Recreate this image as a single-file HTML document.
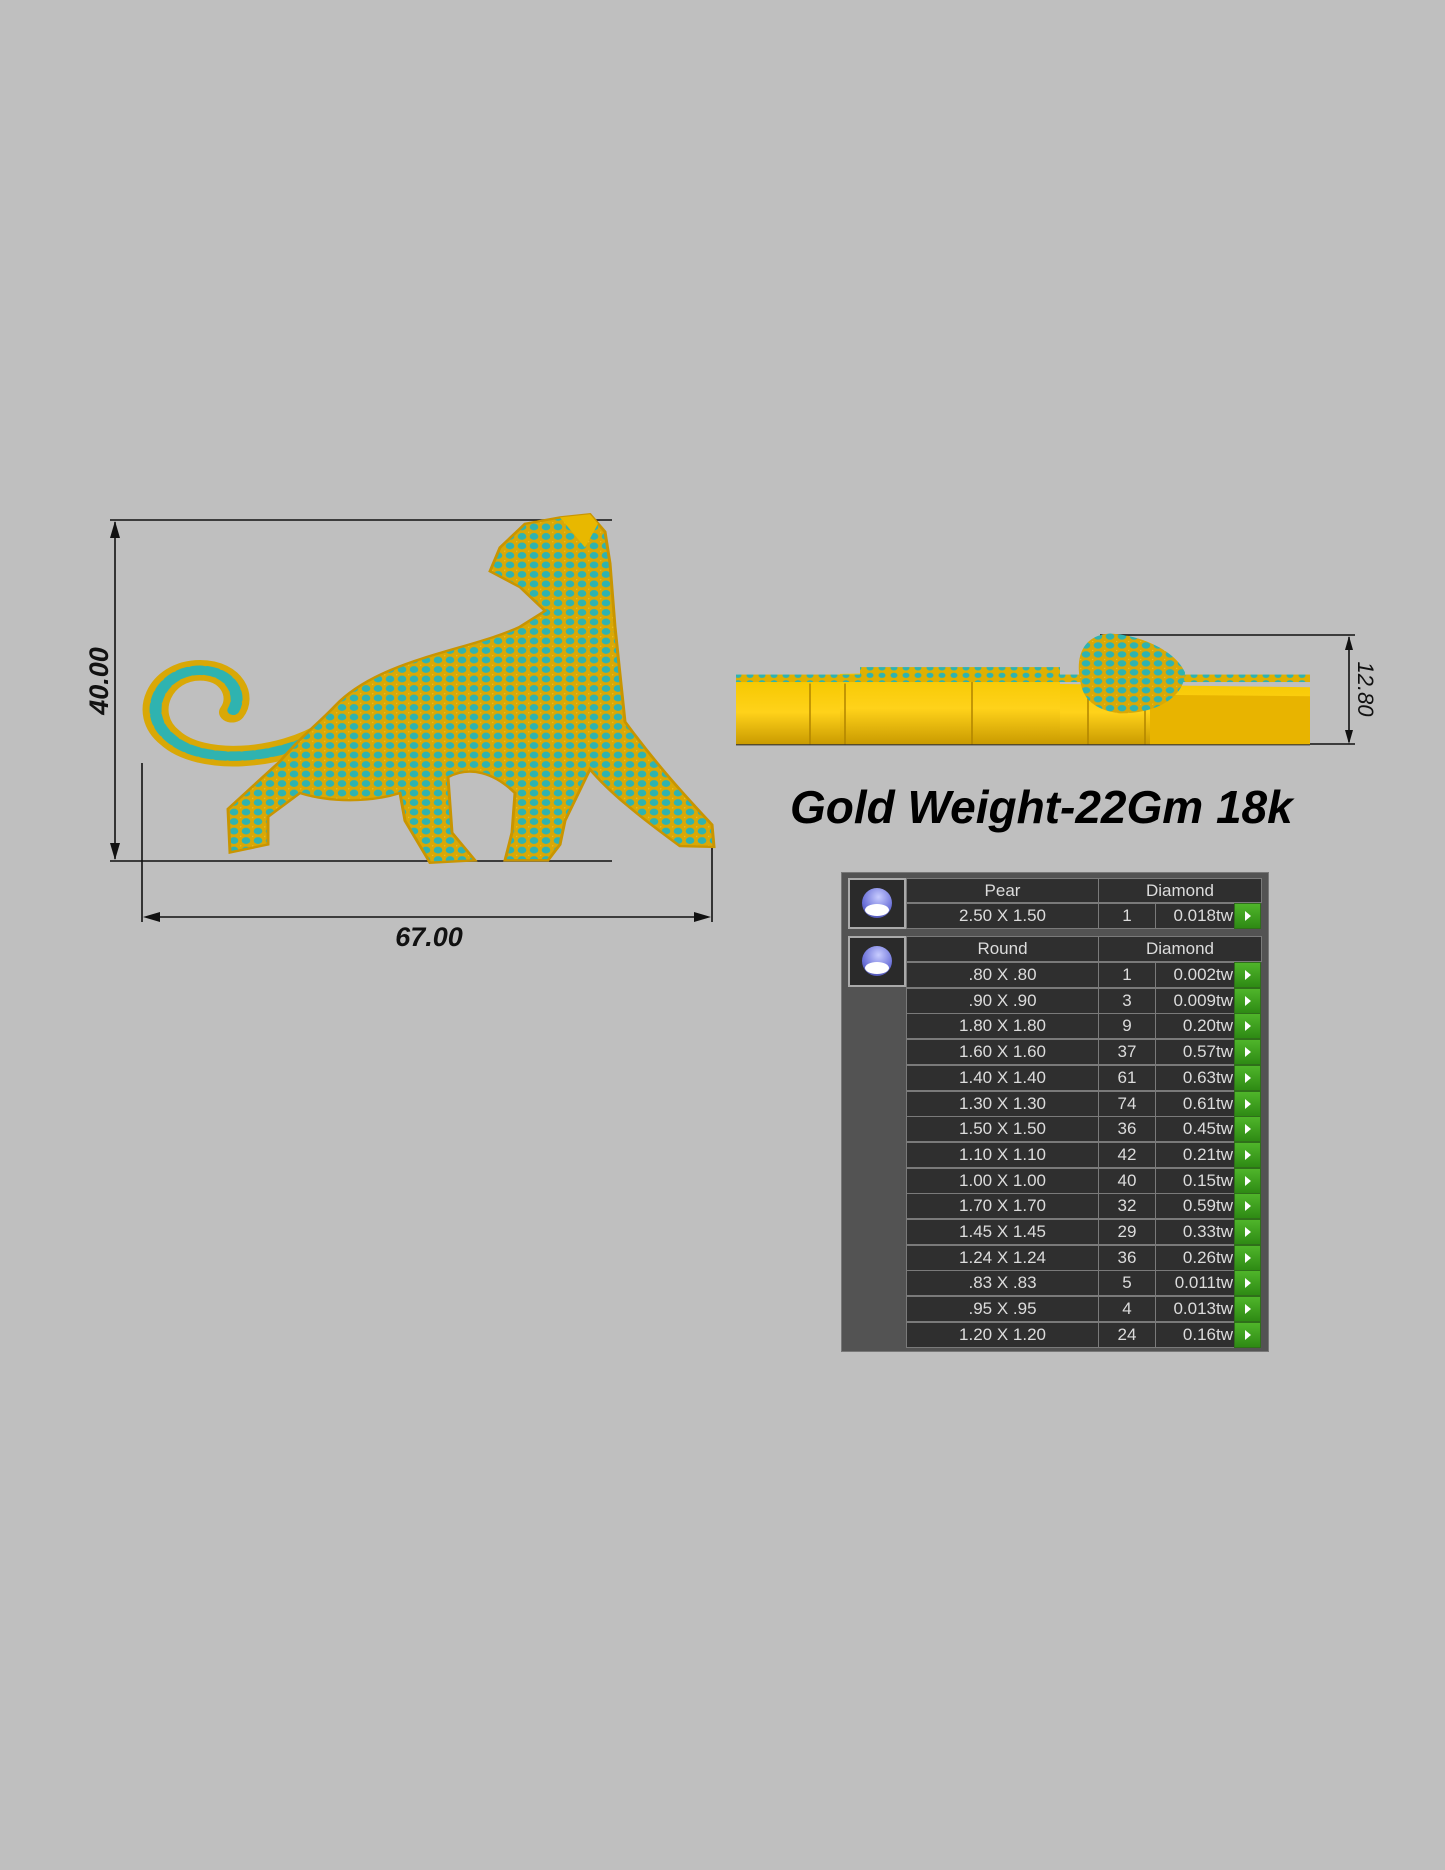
<!DOCTYPE html>
<html><head><meta charset="utf-8"><style>
body{margin:0;background:#bfbfbf;width:1445px;height:1870px;position:relative;overflow:hidden;font-family:"Liberation Sans",sans-serif}
.a{position:absolute}
.panel{left:841px;top:872px;width:428px;height:480px;background:#535353;border:1px solid #777;box-sizing:border-box}
.r{position:absolute;left:906px;width:356px;display:flex;color:#dcdcdc;font-size:17px}
.r div{background:#2f2f2f;border:1px solid #7a7a7a;box-sizing:border-box;display:flex;align-items:center;justify-content:center;height:100%;margin-right:-1px}
.c1{width:193px}.c2{width:58px}.c3{width:80px;justify-content:flex-end!important;padding-right:1px}
.r .b{width:27px;background:linear-gradient(#4fb52a,#2e8a14);border-color:#2f6f1a}
.b:after{content:"";border-left:6px solid #fff;border-top:5px solid transparent;border-bottom:5px solid transparent}
.h{width:164px}
.ic{position:absolute;left:848px;width:58px;height:51px;border:2px solid #aaa;box-sizing:border-box;background:#2a2a2a}
.ic:before{content:"";position:absolute;left:12px;top:8px;width:30px;height:30px;border-radius:50%;background:radial-gradient(circle at 55% 30%,#c8ccff,#6a70d8 60%,#3a3f90)}
.ic:after{content:"";position:absolute;left:15px;top:24px;width:24px;height:12px;border-radius:50%;background:#fff}
</style></head><body>

<svg class="a" style="left:0;top:0" width="1445" height="1870">
<defs>
<pattern id="dots" width="12" height="12" patternUnits="userSpaceOnUse">
<rect width="12" height="12" fill="#d9a806"/>
<circle cx="6" cy="6" r="4.3" fill="#2fb3b0"/>
<circle cx="0" cy="0" r="1.5" fill="#f0c020"/>
</pattern>
<pattern id="dots2" width="12" height="10" patternUnits="userSpaceOnUse">
<rect width="12" height="10" fill="#e0b000"/>
<circle cx="6" cy="4" r="3.5" fill="#2fb3b0"/>
</pattern>
<linearGradient id="gold" x1="0" y1="0" x2="0" y2="1"><stop offset="0" stop-color="#f5c800"/><stop offset="0.5" stop-color="#ffd21a"/><stop offset="1" stop-color="#c99a00"/></linearGradient>
</defs>
<g stroke="#111" stroke-width="1.6" fill="none">
<line x1="110" y1="520" x2="612" y2="520"/>
<line x1="110" y1="861" x2="612" y2="861"/>
<line x1="115" y1="522" x2="115" y2="859"/>
<line x1="142" y1="763" x2="142" y2="922"/>
<line x1="712" y1="835" x2="712" y2="922"/>
<line x1="146" y1="917" x2="708" y2="917"/>
<line x1="1100" y1="635" x2="1355" y2="635"/>
<line x1="1310" y1="744" x2="1355" y2="744"/>
<line x1="1349" y1="637" x2="1349" y2="742"/>
</g>
<g fill="#111">
<polygon points="115,521 110,538 120,538"/><polygon points="115,860 110,843 120,843"/>
<polygon points="143,917 160,912 160,922"/><polygon points="711,917 694,912 694,922"/>
<polygon points="1349,636 1345,650 1353,650"/><polygon points="1349,744 1345,730 1353,730"/>
</g>
<g transform="matrix(1 0 0 0.792 0 104)">
<path d="M330 790 C280 830,200 835,170 800 C140 770,160 715,200 715 C232 715,244 748,232 768" stroke="#d9a806" stroke-width="26" fill="none" stroke-linecap="round"/>
<path d="M330 790 C280 830,200 835,170 800 C140 770,160 715,200 715 C232 715,244 748,232 768" stroke="#2fb3b0" stroke-width="12" stroke-dasharray="9 5" fill="none" stroke-linecap="round"/>
<path d="M335 760 C380 700,470 690,520 660 L545 640 L520 610 L490 590 L500 560 L525 530 L560 522 L590 518 L605 540 L610 580 L615 660 L625 780 C660 840,690 880,712 910 L714 938 L680 937 C640 900,610 870,590 840 L565 905 L560 935 L548 955 L505 955 L512 920 L515 870 C495 845,470 835,448 850 L452 920 L475 955 L430 958 L405 905 L400 870 C370 882,330 882,300 870 L268 900 L268 935 L230 945 L228 890 L280 830 C300 800,320 780,335 760 Z" fill="url(#dots)" stroke="#c99500" stroke-width="3"/>
<path d="M560 522 L590 518 L598 530 L585 560 Z" fill="#e8b800"/>
</g>
<g transform="matrix(1 0 0 0.7467 0 157.1)">
<path d="M736 700 L1310 710 L1310 787 L736 787 Z" fill="url(#gold)"/>
<path d="M840 692 L930 690 L1060 693 L1060 787 L840 787 Z" fill="url(#gold)"/>
<path d="M1150 720 L1310 722 L1310 787 L1150 787 Z" fill="#e8b400"/>
<g stroke="#b08400" stroke-width="1.5"><line x1="810" y1="705" x2="810" y2="787"/><line x1="845" y1="705" x2="845" y2="787"/><line x1="972" y1="695" x2="972" y2="787"/><line x1="1088" y1="715" x2="1088" y2="787"/><line x1="1145" y1="720" x2="1145" y2="787"/></g>
<rect x="736" y="693" width="574" height="10" fill="url(#dots2)"/>
<rect x="860" y="683" width="200" height="12" fill="url(#dots2)"/>
<path d="M1080 700 C1075 665,1085 640,1110 638 C1140 640,1175 660,1185 690 C1185 720,1160 745,1120 745 C1090 740,1082 720,1080 700 Z" fill="url(#dots)"/>
<line x1="736" y1="787" x2="1310" y2="787" stroke="#333" stroke-width="1.5"/>
</g>
</svg>

<div class="a" style="left:64px;top:664px;width:70px;height:34px;transform:rotate(-90deg);font:italic bold 27px 'Liberation Sans',sans-serif;color:#111;text-align:center;line-height:34px">40.00</div>
<div class="a" style="left:379px;top:922px;width:100px;text-align:center;font:italic bold 27px 'Liberation Sans',sans-serif;color:#111">67.00</div>
<div class="a" style="left:1335px;top:674px;width:60px;height:30px;transform:rotate(90deg);font:italic 22px 'Liberation Sans',sans-serif;color:#111;text-align:center;line-height:30px">12.80</div>
<div class="a" style="left:790px;top:780px;font:italic bold 46px 'Liberation Sans',sans-serif;color:#000;white-space:nowrap">Gold Weight-22Gm 18k</div>

<div class="a panel"></div>
<div class="ic" style="top:878px"></div>
<div class="ic" style="top:936px"></div>
<div class="r" style="top:878px;height:25px"><div class="c1">Pear</div><div class="h">Diamond</div></div>
<div class="r" style="top:903px;height:26px"><div class="c1">2.50 X 1.50</div><div class="c2">1</div><div class="c3">0.018tw</div><div class="b"></div></div>
<div class="r" style="top:936px;height:26px"><div class="c1">Round</div><div class="h">Diamond</div></div>
<div class="r" style="top:962px;height:26px"><div class="c1">.80 X .80</div><div class="c2">1</div><div class="c3">0.002tw</div><div class="b"></div></div>
<div class="r" style="top:987.7px;height:26px"><div class="c1">.90 X .90</div><div class="c2">3</div><div class="c3">0.009tw</div><div class="b"></div></div>
<div class="r" style="top:1013.4px;height:26px"><div class="c1">1.80 X 1.80</div><div class="c2">9</div><div class="c3">0.20tw</div><div class="b"></div></div>
<div class="r" style="top:1039.1px;height:26px"><div class="c1">1.60 X 1.60</div><div class="c2">37</div><div class="c3">0.57tw</div><div class="b"></div></div>
<div class="r" style="top:1064.8px;height:26px"><div class="c1">1.40 X 1.40</div><div class="c2">61</div><div class="c3">0.63tw</div><div class="b"></div></div>
<div class="r" style="top:1090.5px;height:26px"><div class="c1">1.30 X 1.30</div><div class="c2">74</div><div class="c3">0.61tw</div><div class="b"></div></div>
<div class="r" style="top:1116.2px;height:26px"><div class="c1">1.50 X 1.50</div><div class="c2">36</div><div class="c3">0.45tw</div><div class="b"></div></div>
<div class="r" style="top:1141.9px;height:26px"><div class="c1">1.10 X 1.10</div><div class="c2">42</div><div class="c3">0.21tw</div><div class="b"></div></div>
<div class="r" style="top:1167.6px;height:26px"><div class="c1">1.00 X 1.00</div><div class="c2">40</div><div class="c3">0.15tw</div><div class="b"></div></div>
<div class="r" style="top:1193.3px;height:26px"><div class="c1">1.70 X 1.70</div><div class="c2">32</div><div class="c3">0.59tw</div><div class="b"></div></div>
<div class="r" style="top:1219px;height:26px"><div class="c1">1.45 X 1.45</div><div class="c2">29</div><div class="c3">0.33tw</div><div class="b"></div></div>
<div class="r" style="top:1244.7px;height:26px"><div class="c1">1.24 X 1.24</div><div class="c2">36</div><div class="c3">0.26tw</div><div class="b"></div></div>
<div class="r" style="top:1270.4px;height:26px"><div class="c1">.83 X .83</div><div class="c2">5</div><div class="c3">0.011tw</div><div class="b"></div></div>
<div class="r" style="top:1296.1px;height:26px"><div class="c1">.95 X .95</div><div class="c2">4</div><div class="c3">0.013tw</div><div class="b"></div></div>
<div class="r" style="top:1321.8px;height:26px"><div class="c1">1.20 X 1.20</div><div class="c2">24</div><div class="c3">0.16tw</div><div class="b"></div></div>
</body></html>
